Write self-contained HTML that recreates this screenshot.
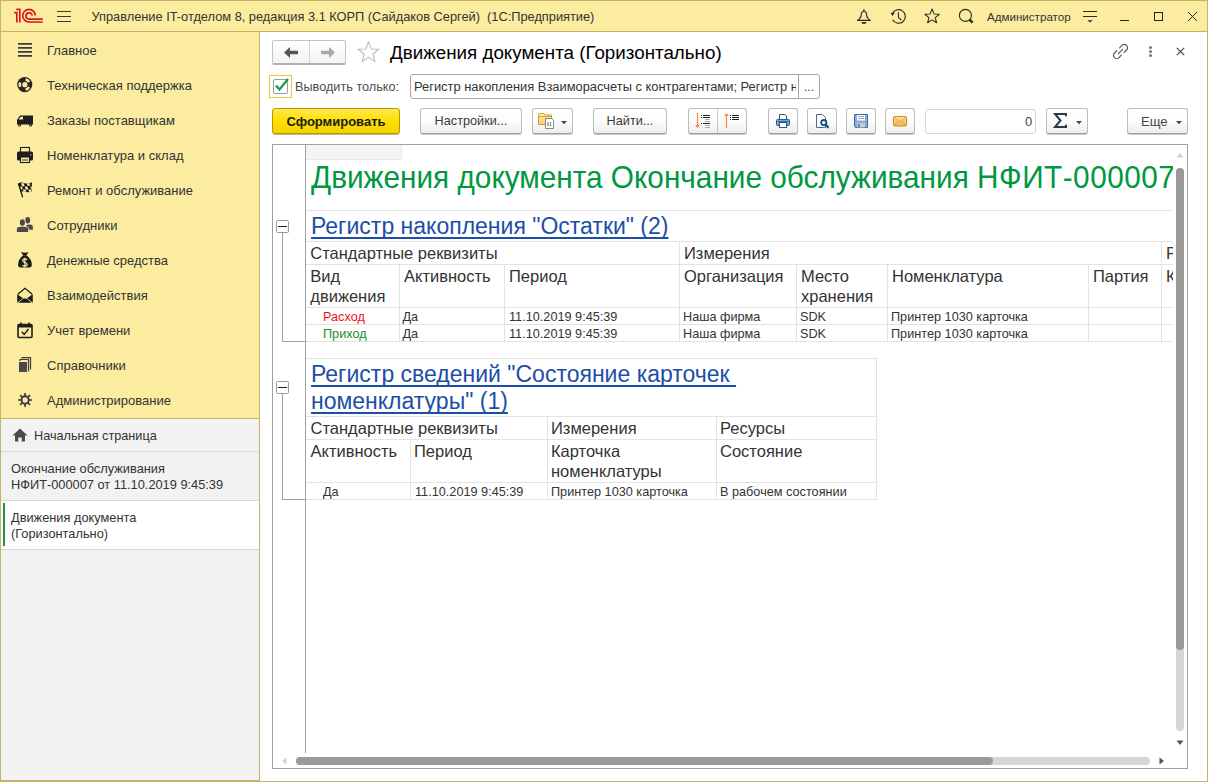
<!DOCTYPE html>
<html><head><meta charset="utf-8">
<style>
*{margin:0;padding:0;box-sizing:border-box}
html,body{width:1208px;height:782px;overflow:hidden;background:#fff;font-family:"Liberation Sans",sans-serif;color:#333;position:relative}
.a{position:absolute}
.n{white-space:nowrap}
svg{position:absolute;overflow:visible}
.si{position:absolute;left:47px;font-size:13px;color:#333;white-space:nowrap;line-height:16px}
.btn{position:absolute;top:108px;height:26px;border:1px solid #bcbcbc;border-bottom-color:#a0a0a0;border-radius:3px;background:linear-gradient(#ffffff 0%,#fcfcfc 50%,#ededed 100%);box-shadow:0 1px 0 rgba(0,0,0,.22);font-size:12.7px;color:#3a3a3a;text-align:center;line-height:25px;white-space:nowrap}
.gl{position:absolute;background:#e3e3e3}
.c16{position:absolute;font-size:16.3px;color:#333;white-space:nowrap;line-height:20px}
.c13{position:absolute;font-size:12.7px;color:#333;white-space:nowrap;line-height:16px}
</style></head><body>
<!-- window frame -->
<div class="a" style="left:0;top:0;width:1208px;height:782px;border:1px solid #c5b466"></div>
<!-- title bar -->
<div class="a" style="left:1px;top:1px;width:1206px;height:30px;background:#fbeca0"></div>
<div class="a" style="left:0;top:31px;width:1208px;height:1px;background:#c5b466"></div>
<!-- sidebar -->
<div class="a" style="left:1px;top:32px;width:258px;height:386px;background:#fbeca0"></div>
<div class="a" style="left:1px;top:418px;width:258px;height:363px;background:#f2f2f2"></div>
<div class="a" style="left:1px;top:418px;width:258px;height:1px;background:#c5b466"></div>
<div class="a" style="left:259px;top:32px;width:1px;height:750px;background:#c5b466"></div>
<div class="a" style="left:0;top:780px;width:260px;height:1px;background:#c5b466"></div>

<!-- title bar content -->
<svg style="left:0;top:0" width="50" height="30" viewBox="0 0 50 30">
  <g fill="none" stroke="#d8141c" stroke-width="1.65">
    <path d="M14.1 12.6 H16.8 V22.5 M16.3 9.3 H19.8 V22.5"/>
    <path d="M35.3 15.6 A6.3 6.3 0 1 0 29 22 H42.8"/>
    <path d="M32.2 15.6 A3.15 3.15 0 1 0 29 19.1 H42.8"/>
  </g>
</svg>
<div class="a" style="left:57px;top:11px;width:14px;height:1px;background:#3a3a3a"></div>
<div class="a" style="left:57px;top:16px;width:14px;height:1px;background:#3a3a3a"></div>
<div class="a" style="left:57px;top:21px;width:14px;height:1px;background:#3a3a3a"></div>
<div class="a n" style="left:91.5px;top:9px;font-size:12.8px;line-height:16px;color:#333">Управление IT-отделом 8, редакция 3.1 КОРП (Сайдаков Сергей)&nbsp; (1С:Предприятие)</div>
<!-- bell -->
<svg style="left:856px;top:8px" width="16" height="17" viewBox="0 0 16 17">
  <circle cx="7.9" cy="2.1" r="0.95" fill="#2a2a2a"/>
  <path d="M5.5 5.4 Q5.5 3.5 7.9 3.5 Q10.3 3.5 10.3 5.4 Q10.5 9 12.4 10.9 L14.3 12.4 H1.5 L3.4 10.9 Q5.3 9 5.5 5.4Z" fill="none" stroke="#2a2a2a" stroke-width="1.1" stroke-linejoin="round"/>
  <path d="M5.3 14 H10.5 Q10.1 15.9 7.9 15.9 Q5.7 15.9 5.3 14Z" fill="#2a2a2a"/>
</svg>
<!-- history -->
<svg style="left:890px;top:8px" width="17" height="17" viewBox="0 0 17 17">
  <path d="M2.2 6.0 A6.8 6.8 0 1 1 2.6 11.8" fill="none" stroke="#2a2a2a" stroke-width="1.15"/>
  <path d="M0.6 4.9 L4.9 4.6 L2.5 8.1Z" fill="#2a2a2a"/>
  <path d="M8.4 4.3 V9.3 L11.3 12" fill="none" stroke="#2a2a2a" stroke-width="1.1"/>
</svg>
<!-- star -->
<svg style="left:924px;top:8px" width="17" height="17" viewBox="0 0 17 17">
  <polygon points="8.10,1.00 10.04,5.93 15.33,6.25 11.24,9.62 12.57,14.75 8.10,11.90 3.63,14.75 4.96,9.62 0.87,6.25 6.16,5.93" fill="none" stroke="#2a2a2a" stroke-width="1.05" stroke-linejoin="round"/>
</svg>
<!-- search -->
<svg style="left:958px;top:8px" width="17" height="17" viewBox="0 0 17 17">
  <circle cx="7.4" cy="7.4" r="6.0" fill="none" stroke="#2a2a2a" stroke-width="1.1"/><path d="M11.6 11.6 L14.6 14.6" stroke="#2a2a2a" stroke-width="2.6"/>
</svg>
<div class="a n" style="left:987px;top:9.5px;font-size:11.6px;line-height:14px;color:#333">Администратор</div>
<!-- filter-like icon -->
<svg style="left:1083px;top:8px" width="16" height="16" viewBox="0 0 16 16">
  <path d="M0 3.5H14M0 8.5H14" stroke="#2a2a2a" stroke-width="1"/><path d="M4.5 12.3H9.6L7.05 14.6Z" fill="#2a2a2a"/>
</svg>
<div class="a" style="left:1120px;top:20px;width:9px;height:1px;background:#222"></div>
<div class="a" style="left:1154px;top:12px;width:9px;height:9px;border:1px solid #222"></div>
<svg style="left:1188px;top:12px" width="9" height="9" viewBox="0 0 9 9"><path d="M0 0L9 9M9 0L0 9" stroke="#222" stroke-width="0.95"/></svg>

<!-- sidebar items -->
<div class="si" style="top:43px">Главное</div>
<div class="si" style="top:78px">Техническая поддержка</div>
<div class="si" style="top:113px">Заказы поставщикам</div>
<div class="si" style="top:148px">Номенклатура и склад</div>
<div class="si" style="top:183px">Ремонт и обслуживание</div>
<div class="si" style="top:218px">Сотрудники</div>
<div class="si" style="top:253px">Денежные средства</div>
<div class="si" style="top:288px">Взаимодействия</div>
<div class="si" style="top:323px">Учет времени</div>
<div class="si" style="top:358px">Справочники</div>
<div class="si" style="top:393px">Администрирование</div>
<svg style="left:17px;top:38px" width="16" height="16" viewBox="0 0 16 16"><path d="M1 5.9H15M1 9.9H15M1 13.9H15M1 17.9H15" stroke="#3a3a44" stroke-width="1.9"/></svg>
<svg style="left:17px;top:77px" width="16" height="16" viewBox="0 0 16 16"><circle cx="7.75" cy="7.6" r="7.6" fill="#2b2626"/><circle cx="7.9" cy="7.7" r="2.6" fill="#fbeca0"/><g stroke="#fbeca0" stroke-width="2.5" fill="none"><path d="M8.6 2.6 A5.05 5.05 0 0 1 12.1 5.1"/><path d="M12.1 10.1 A5.05 5.05 0 0 1 8.6 12.6"/><path d="M3.2 9.7 A5.05 5.05 0 0 1 3.2 5.5"/></g></svg>
<svg style="left:17px;top:115px" width="16" height="16" viewBox="0 0 16 16"><path d="M6 0.5H16V9.5H0V5L3 0.5Z" fill="#1e1e1e"/><path d="M3.6 1.8H6V4.6H1.7Z" fill="#fbeca0"/><circle cx="2.6" cy="10" r="1.6" fill="#1e1e1e"/><circle cx="13.6" cy="10" r="1.6" fill="#1e1e1e"/><circle cx="2.6" cy="10" r="0.6" fill="#fbeca0"/><circle cx="13.6" cy="10" r="0.6" fill="#fbeca0"/></svg>
<svg style="left:17px;top:147px" width="16" height="16" viewBox="0 0 16 16"><rect x="3.5" y="0.5" width="9" height="5" fill="#fbeca0" stroke="#1e1e1e" stroke-width="1.1"/><rect x="0" y="4.5" width="16" height="9" rx="1.5" fill="#1e1e1e"/><rect x="13" y="7" width="1.5" height="1.5" fill="#8a8060"/><rect x="3.5" y="10" width="9" height="5.5" fill="#fbeca0" stroke="#1e1e1e" stroke-width="1.1"/><path d="M5 13H11" stroke="#1e1e1e" stroke-width="0.9"/></svg>
<svg style="left:14px;top:178px" width="22" height="22" viewBox="0 0 22 22"><defs><clipPath id="fc"><path d="M3.8 5.8 Q7 3.6 10.5 5.2 Q14 6.4 17.8 4.2 V13.5 Q14 15 11 13.6 Q8.5 12.6 7 13.8Z"/></clipPath></defs><path d="M3.8 5.8 Q7 3.6 10.5 5.2 Q14 6.4 17.8 4.2 V13.5 Q14 15 11 13.6 Q8.5 12.6 7 13.8Z" fill="#141414"/><g clip-path="url(#fc)" fill="#fbeca0"><polygon points="7.05,5.35 9.80,5.35 10.70,8.25 7.95,8.25"/><polygon points="12.55,4.85 15.30,4.85 16.20,7.75 13.45,7.75"/><polygon points="5.20,8.50 7.95,8.50 8.85,11.40 6.10,11.40"/><polygon points="10.70,8.50 13.45,8.50 14.35,11.40 11.60,11.40"/><polygon points="16.20,8.50 18.95,8.50 19.85,11.40 17.10,11.40"/><polygon points="8.85,11.40 11.60,11.40 12.50,14.30 9.75,14.30"/><polygon points="14.35,11.40 17.10,11.40 18.00,14.30 15.25,14.30"/></g><path d="M5 7 L8.6 19.3" stroke="#141414" stroke-width="1.3"/></svg>
<svg style="left:14px;top:212px" width="22" height="22" viewBox="0 0 22 22"><g fill="#48484e"><ellipse cx="13.7" cy="8.3" rx="2.4" ry="3.3"/><path d="M12.3 13.2 Q13 12.6 15 12.6 H16.5 Q18.9 12.8 18.9 15 V17.7 H12.3Z"/></g><g fill="#48484e" stroke="#fbeca0" stroke-width="1.4" paint-order="stroke"><ellipse cx="8.35" cy="10.5" rx="2.5" ry="3.3"/><path d="M2.9 19.9 V17 Q3.1 14.8 6.4 14.8 H10.4 Q13.9 14.8 14.1 17 V19.9Z"/></g></svg>
<svg style="left:14px;top:248px" width="22" height="22" viewBox="0 0 22 22"><path d="M6.9 4.1 Q10.8 5.2 14.6 4.1 L12.3 7.4 H9.3 Z" fill="#1a1a1a"/><path d="M9.3 7.2 H12.3 Q17.8 11 17.8 16.8 Q17.8 19.5 15.4 19.5 H6.5 Q4.1 19.5 4.1 16.8 Q4.1 11 9.3 7.2 Z" fill="#1a1a1a"/><g fill="none" stroke="#fbeca0" stroke-width="1.25"><path d="M12.9 11.9 Q12.3 10.9 10.9 10.9 Q8.7 10.9 8.7 12.6 Q8.7 14 10.9 14.5 Q13.1 15 13.1 16.6 Q13.1 18.2 10.9 18.2 Q9.3 18.2 8.5 17.1"/><path d="M10.9 9.7 V19.2"/></g></svg>
<svg style="left:17px;top:284px" width="16" height="20" viewBox="0 0 16 20"><path d="M0.8 10.2 L8 4.3 L15.2 10.2" fill="none" stroke="#1a1a1a" stroke-width="1.2"/><path d="M0.2 10.2 L6 14.3 L0.2 18.7Z M15.8 10.2 L10 14.3 L15.8 18.7Z M1.4 18.8 L6.6 14.6 H9.4 L14.6 18.8Z" fill="#1a1a1a"/></svg>
<svg style="left:17px;top:322px" width="16" height="16" viewBox="0 0 16 16"><rect x="1" y="2.5" width="14" height="13" rx="1" fill="none" stroke="#1e1e1e" stroke-width="1.6"/><rect x="1" y="2.5" width="14" height="3" fill="#1e1e1e"/><path d="M4 0.5V3M12 0.5V3" stroke="#1e1e1e" stroke-width="1.6"/><path d="M4.8 9.8 L7.2 12.4 L11.5 7" fill="none" stroke="#1e1e1e" stroke-width="1.5"/></svg>
<svg style="left:17px;top:357px" width="16" height="16" viewBox="0 0 16 16"><rect x="2" y="5" width="8" height="10" fill="#48484e"/><path d="M3 4V2.5H11.5V14H11" fill="none" stroke="#3c3c44" stroke-width="1.2"/><path d="M5 1.5V0.6H13.5V12H13" fill="none" stroke="#3c3c44" stroke-width="1.2"/></svg>
<svg style="left:17px;top:392px" width="16" height="16" viewBox="0 0 16 16"><circle cx="8.1" cy="8.0" r="3.65" fill="none" stroke="#3a3a42" stroke-width="2"/><path d="M8.10 4.00L8.10 1.00M10.93 5.17L13.05 3.05M12.10 8.00L15.10 8.00M10.93 10.83L13.05 12.95M8.10 12.00L8.10 15.00M5.27 10.83L3.15 12.95M4.10 8.00L1.10 8.00M5.27 5.17L3.15 3.05" stroke="#3a3a42" stroke-width="1.7"/></svg>
<!-- open windows -->
<svg style="left:12px;top:428px" width="16" height="14" viewBox="0 0 16 14"><path d="M8 0.5 L15.5 7.5 H13 V13.5 H9.7 V9.5 H6.3 V13.5 H3 V7.5 H0.5Z" fill="#4a4a4a"/></svg>
<div class="si" style="left:34px;top:427.5px;font-size:12.7px">Начальная страница</div>
<div class="a" style="left:1px;top:451px;width:258px;height:1px;background:#d9d9d9"></div>
<div class="si" style="left:11px;top:460.5px;font-size:12.8px;line-height:16px">Окончание обслуживания<br>НФИТ-000007 от 11.10.2019 9:45:39</div>
<div class="a" style="left:1px;top:500px;width:258px;height:1px;background:#d9d9d9"></div>
<div class="a" style="left:1px;top:501px;width:258px;height:48px;background:#fff"></div>
<div class="a" style="left:3px;top:503px;width:2px;height:43px;background:#1a9641"></div>
<div class="si" style="left:11px;top:509.5px;font-size:12.8px;line-height:16px">Движения документа<br>(Горизонтально)</div>
<div class="a" style="left:1px;top:549px;width:258px;height:1px;background:#d9d9d9"></div>
<!-- form header -->
<div class="a" style="left:272px;top:40px;width:74px;height:25px;border:1px solid #c4c4c4;border-bottom:2px solid #b0b0b0;border-radius:2px;background:linear-gradient(#fff,#f3f3f3)"></div>
<div class="a" style="left:309px;top:41px;width:1px;height:22px;background:#d4d4d4"></div>
<svg style="left:284px;top:47px" width="15" height="11" viewBox="0 0 15 11"><path d="M0 5.5 L6 0 V3.8 H14 V7.2 H6 V11Z" fill="#555"/></svg>
<svg style="left:320px;top:47px" width="15" height="11" viewBox="0 0 15 11"><path d="M15 5.5 L9 0 V3.8 H1 V7.2 H9 V11Z" fill="#a8a8a8"/></svg>
<svg style="left:357px;top:41px" width="23" height="22" viewBox="0 0 23 22"><path d="M11.5 1 L14.2 8 L21.8 8.3 L15.9 13 L17.9 20.6 L11.5 16.3 L5.1 20.6 L7.1 13 L1.2 8.3 L8.8 8Z" fill="none" stroke="#b4bcc4" stroke-width="1.1" stroke-linejoin="miter"/></svg>
<div class="a n" style="left:390px;top:41.6px;font-size:18.8px;line-height:22px;color:#000">Движения документа (Горизонтально)</div>
<svg style="left:1112px;top:43px" width="17" height="17" viewBox="0 0 17 17"><g fill="none" stroke="#555" stroke-width="1.15" stroke-linecap="round"><path d="M7.6 4.8 L10 2.4 A2.9 2.9 0 0 1 14.6 7 L12.2 9.4"/><path d="M9.4 12.2 L7 14.6 A2.9 2.9 0 0 1 2.4 10 L4.8 7.6"/><path d="M6.3 10.7 L10.7 6.3"/></g></svg>
<div class="a" style="left:1149px;top:46px;width:3px;height:3px;border-radius:50%;background:#777"></div>
<div class="a" style="left:1149px;top:50px;width:3px;height:3px;border-radius:50%;background:#777"></div>
<div class="a" style="left:1149px;top:54px;width:3px;height:3px;border-radius:50%;background:#777"></div>
<svg style="left:1176px;top:47px" width="9" height="9" viewBox="0 0 9 9"><path d="M0.8 0.8L8.2 8.2M8.2 0.8L0.8 8.2" stroke="#444" stroke-width="1.2"/></svg>
<!-- checkbox row -->
<div class="a" style="left:269px;top:75px;width:23px;height:23px;border:1px solid #f2c43a"></div>
<div class="a" style="left:273px;top:79px;width:15px;height:15px;border:1px solid #9a9a9a;border-radius:2px;background:#fff"></div>
<svg style="left:274px;top:77px" width="16" height="16" viewBox="0 0 16 16"><path d="M2 8.5 L5.5 12.5 L14 2" fill="none" stroke="#1c9a48" stroke-width="2.3"/></svg>
<div class="a n" style="left:295px;top:79px;font-size:12.7px;line-height:16px;color:#4d4d4d">Выводить только:</div>
<div class="a" style="left:410px;top:74px;width:410px;height:25px;border:1px solid #a6a6a6;border-radius:3px;background:#fff;overflow:hidden">
  <div class="a n" style="left:3px;top:4px;width:382px;overflow:hidden;font-size:12.88px;line-height:16px;color:#333">Регистр накопления Взаиморасчеты с контрагентами; Регистр накопления</div>
  <div class="a" style="left:387px;top:0;width:1px;height:23px;background:#a6a6a6"></div>
  <div class="a n" style="left:393px;top:4px;font-size:12px;line-height:16px;color:#444">...</div>
</div>
<!-- toolbar -->
<div class="a" style="left:272px;top:108px;width:128px;height:26px;border:1px solid #b29a00;border-radius:3px;background:linear-gradient(#ffe94d,#ffe000 50%,#f5d300);box-shadow:0 1px 0 rgba(120,100,0,.45)"></div>
<div class="a n" style="left:272px;top:113.5px;width:128px;text-align:center;font-size:13px;font-weight:bold;line-height:16px;color:#1a1a1a">Сформировать</div>
<div class="btn" style="left:420px;width:102px">Настройки...</div>
<div class="btn" style="left:532px;width:41px"></div>
<div class="btn" style="left:593px;width:74px">Найти...</div>
<div class="btn" style="left:688px;width:59px"></div>
<div class="a" style="left:717px;top:109px;width:1px;height:24px;background:#c8c8c8"></div>
<div class="btn" style="left:768px;width:30px"></div>
<div class="btn" style="left:807px;width:30px"></div>
<div class="btn" style="left:846px;width:30px"></div>
<div class="btn" style="left:885px;width:30px"></div>
<div class="a" style="left:925px;top:109px;width:111px;height:25px;border:1px solid #d6d6d6;border-radius:3px;background:#fff"></div>
<div class="a n" style="left:1025px;top:114px;font-size:13px;line-height:16px;color:#444">0</div>
<div class="btn" style="left:1046px;width:42px"></div>
<div class="btn" style="left:1127px;width:61px"></div>
<div class="a n" style="left:1141px;top:114px;font-size:13px;line-height:16px;color:#444">Еще</div>
<svg style="left:1176px;top:121px" width="6" height="4" viewBox="0 0 6 4"><path d="M0 0H6L3 3.2Z" fill="#444"/></svg>
<svg style="left:1076px;top:121px" width="6" height="4" viewBox="0 0 6 4"><path d="M0 0H6L3 3.2Z" fill="#444"/></svg>
<svg style="left:561px;top:121px" width="6" height="4" viewBox="0 0 6 4"><path d="M0 0H6L3 3.2Z" fill="#444"/></svg>
<!-- sigma -->
<svg style="left:1054px;top:113px" width="13" height="15" viewBox="0 0 13 15"><path d="M12 3.2 V1 H1 L6.5 7.5 L1 14 H12 V11.8" fill="none" stroke="#2a3a4a" stroke-width="2"/></svg>
<!-- toolbar icons -->
<svg style="left:532px;top:108px" width="30" height="26" viewBox="0 0 30 26">
  <defs><linearGradient id="fg" x1="0" y1="0" x2="0" y2="1"><stop offset="0" stop-color="#fff0a8"/><stop offset="1" stop-color="#f4cf6e"/></linearGradient></defs>
  <path d="M6.5 16.5 V6.3 Q6.5 5.5 7.3 5.5 H11.8 L13 7 H19.5 V16.5Z" fill="url(#fg)" stroke="#d49a38" stroke-width="1"/>
  <path d="M7 8.5 H19" stroke="#d49a38" stroke-width="0.9"/>
  <path d="M13.5 10.5 H19.8 L21.5 12.2 V20.5 H13.5Z" fill="#fff" stroke="#7a8a98" stroke-width="1"/>
  <rect x="15.5" y="14" width="1" height="3.5" fill="#e8322e"/><rect x="18" y="14" width="1" height="3.5" fill="#2fb040"/><rect x="15" y="17.5" width="4.5" height="0.6" fill="#8a8a8a"/>
</svg>
<svg style="left:688px;top:108px" width="60" height="26" viewBox="0 0 60 26">
  <g stroke="#f08a4b" stroke-width="1.2"><path d="M9.5 5 V18.5"/><path d="M38.5 8 V20"/></g>
  <path d="M7 17 H12 L9.5 20Z M36 8 H41 L38.5 5Z" fill="#f08a4b"/>
  <g stroke="#222" stroke-width="1"><path d="M15 7.5H22M15 9.5H22M15 15.5H22M44 7.5H51M44 9.5H51M44 11.5H51"/></g>
  <g stroke="#aaa" stroke-width="1"><path d="M17 11.5H22M17 13.5H22M17 17.5H22M17 19.5H22"/></g>
  <g fill="#222"><rect x="13" y="7" width="1" height="1"/><rect x="13" y="9" width="1" height="1"/><rect x="13" y="15" width="1" height="1"/><rect x="42" y="7" width="1" height="1"/><rect x="42" y="9" width="1" height="1"/><rect x="42" y="11" width="1" height="1"/></g>
</svg>
<svg style="left:768px;top:108px" width="30" height="26" viewBox="0 0 30 26">
  <path d="M11.5 6.5 H17 L18.5 8 V12 H11.5Z" fill="#fff" stroke="#2f5b85" stroke-width="1"/>
  <rect x="8.5" y="11.5" width="13" height="6" rx="1" fill="#7ea6d0" stroke="#2f5b85" stroke-width="1"/>
  <path d="M9.5 13.5 H20.5" stroke="#2f5b85" stroke-width="0.8"/>
  <rect x="11.5" y="14.5" width="7" height="5" fill="#fff" stroke="#2f5b85" stroke-width="1"/>
</svg>
<svg style="left:807px;top:108px" width="30" height="26" viewBox="0 0 30 26">
  <path d="M9.5 6.5 H15.5 L18.5 9.5 V19.5 H9.5Z" fill="#fbfbfb" stroke="#506a88" stroke-width="1"/>
  <circle cx="16.8" cy="14.6" r="2.6" fill="#fff" stroke="#0d4f86" stroke-width="1.8"/>
  <path d="M18.6 16.6 L21.5 19.8" stroke="#0d4f86" stroke-width="2.2"/>
</svg>
<svg style="left:846px;top:108px" width="30" height="26" viewBox="0 0 30 26">
  <path d="M8.5 6.5 H21.5 V19.5 H9.5 L8.5 18.5Z" fill="#86ace0" stroke="#3d6aa6" stroke-width="1"/>
  <rect x="11" y="7" width="8" height="5.5" fill="#fff"/>
  <path d="M12 8.5H18M12 10.5H18" stroke="#7d9cc8" stroke-width="0.8"/>
  <rect x="11" y="15" width="8" height="4.5" fill="#c8ccc8"/><rect x="12" y="16" width="1.6" height="3.5" fill="#4a7ab8"/>
</svg>
<svg style="left:885px;top:108px" width="30" height="26" viewBox="0 0 30 26">
  <defs><linearGradient id="mg" x1="0" y1="0" x2="0" y2="1"><stop offset="0" stop-color="#fbe2a0"/><stop offset="1" stop-color="#efb54e"/></linearGradient></defs>
  <rect x="8.5" y="8.5" width="13" height="9.5" rx="1.5" fill="url(#mg)" stroke="#d08a20" stroke-width="1"/>
  <path d="M9 9.5 L15 14 L21 9.5 M9 17.5 L13 13 M21 17.5 L17 13" fill="none" stroke="#d89a3a" stroke-width="0.7"/>
</svg>
<!-- spreadsheet frame -->
<div class="a" style="left:272px;top:144px;width:916px;height:625px;border:1px solid #a0a0a0;background:#fff"></div>
<div class="a" style="left:305px;top:145px;width:1px;height:608px;background:#a0a0a0"></div>
<div class="a" style="left:306px;top:145px;width:96px;height:15px;background:#f5f5f5;border-right:1px solid #ececec;border-bottom:1px solid #ececec"></div>
<!-- sheet content -->
<div class="a" style="left:306px;top:145px;width:867px;height:608px;overflow:hidden">
<div class="a" style="left:0;top:0;width:96px;height:15px;background:#f4f4f4;border-right:1px solid #e8e8e8;border-bottom:1px solid #e8e8e8"></div>
<div class="a n" style="left:5px;top:14.60px;font-size:30px;line-height:36px;color:#00983f;transform:scale(0.992,1.05);transform-origin:0 29.6px">Движения документа Окончание обслуживания <span style="letter-spacing:0.5px">НФИТ-000007</span></div>
<div class="a" style="left:0px;top:65px;width:867px;height:1px;background:#e3e3e3"></div>
<div class="a" style="left:0px;top:96px;width:867px;height:1px;background:#e3e3e3"></div>
<div class="a" style="left:0px;top:119px;width:867px;height:1px;background:#e3e3e3"></div>
<div class="a" style="left:0px;top:162px;width:867px;height:1px;background:#e3e3e3"></div>
<div class="a" style="left:0px;top:179px;width:867px;height:1px;background:#e3e3e3"></div>
<div class="a" style="left:0px;top:196px;width:867px;height:1px;background:#e3e3e3"></div>
<div class="a n" style="left:5px;top:66.53px;font-size:23px;line-height:28px;color:#1d4ea6;text-decoration:underline;text-decoration-skip-ink:none;text-underline-offset:3px">Регистр накопления "Остатки" (2)</div>
<div class="a" style="left:373px;top:96px;width:1px;height:100px;background:#e3e3e3"></div>
<div class="a" style="left:855px;top:96px;width:1px;height:100px;background:#e3e3e3"></div>
<div class="a" style="left:93px;top:119px;width:1px;height:77px;background:#e3e3e3"></div>
<div class="a" style="left:198px;top:119px;width:1px;height:77px;background:#e3e3e3"></div>
<div class="a" style="left:490px;top:119px;width:1px;height:77px;background:#e3e3e3"></div>
<div class="a" style="left:581px;top:119px;width:1px;height:77px;background:#e3e3e3"></div>
<div class="a" style="left:782px;top:119px;width:1px;height:77px;background:#e3e3e3"></div>
<div class="a n" style="left:4.300000000000011px;top:98.28px;font-size:16.5px;line-height:20px;color:#333;">Стандартные реквизиты</div>
<div class="a n" style="left:378px;top:98.28px;font-size:16.5px;line-height:20px;color:#333;">Измерения</div>
<div class="a n" style="left:860px;top:98.28px;font-size:16.5px;line-height:20px;color:#333;">Ресурсы</div>
<div class="a n" style="left:4.300000000000011px;top:121.48px;font-size:16.5px;line-height:20px;color:#333;">Вид</div>
<div class="a n" style="left:4.300000000000011px;top:141.48px;font-size:16.5px;line-height:20px;color:#333;">движения</div>
<div class="a n" style="left:98px;top:121.48px;font-size:16.5px;line-height:20px;color:#333;">Активность</div>
<div class="a n" style="left:203px;top:121.48px;font-size:16.5px;line-height:20px;color:#333;">Период</div>
<div class="a n" style="left:378px;top:121.48px;font-size:16.5px;line-height:20px;color:#333;">Организация</div>
<div class="a n" style="left:495px;top:121.48px;font-size:16.5px;line-height:20px;color:#333;">Место</div>
<div class="a n" style="left:495px;top:141.48px;font-size:16.5px;line-height:20px;color:#333;">хранения</div>
<div class="a n" style="left:586px;top:121.48px;font-size:16.5px;line-height:20px;color:#333;">Номенклатура</div>
<div class="a n" style="left:787px;top:121.48px;font-size:16.5px;line-height:20px;color:#333;">Партия</div>
<div class="a n" style="left:860px;top:121.48px;font-size:16.5px;line-height:20px;color:#333;">Количество</div>
<div class="a n" style="left:17px;top:164.60px;font-size:12.7px;line-height:15px;color:#f2101a;">Расход</div>
<div class="a n" style="left:96.5px;top:164.60px;font-size:12.7px;line-height:15px;color:#333;">Да</div>
<div class="a n" style="left:203px;top:164.60px;font-size:12.7px;line-height:15px;color:#333;">11.10.2019 9:45:39</div>
<div class="a n" style="left:377px;top:164.60px;font-size:12.7px;line-height:15px;color:#333;">Наша фирма</div>
<div class="a n" style="left:494px;top:164.60px;font-size:12.7px;line-height:15px;color:#333;">SDK</div>
<div class="a n" style="left:585px;top:164.60px;font-size:12.7px;line-height:15px;color:#333;">Принтер 1030 карточка</div>
<div class="a n" style="left:17px;top:181.60px;font-size:12.7px;line-height:15px;color:#1a8f2a;">Приход</div>
<div class="a n" style="left:96.5px;top:181.60px;font-size:12.7px;line-height:15px;color:#333;">Да</div>
<div class="a n" style="left:203px;top:181.60px;font-size:12.7px;line-height:15px;color:#333;">11.10.2019 9:45:39</div>
<div class="a n" style="left:377px;top:181.60px;font-size:12.7px;line-height:15px;color:#333;">Наша фирма</div>
<div class="a n" style="left:494px;top:181.60px;font-size:12.7px;line-height:15px;color:#333;">SDK</div>
<div class="a n" style="left:585px;top:181.60px;font-size:12.7px;line-height:15px;color:#333;">Принтер 1030 карточка</div>
<div class="a" style="left:0px;top:213px;width:570px;height:1px;background:#e3e3e3"></div>
<div class="a" style="left:0px;top:271px;width:570px;height:1px;background:#e3e3e3"></div>
<div class="a" style="left:0px;top:294px;width:570px;height:1px;background:#e3e3e3"></div>
<div class="a" style="left:0px;top:337px;width:570px;height:1px;background:#e3e3e3"></div>
<div class="a" style="left:0px;top:354px;width:570px;height:1px;background:#e3e3e3"></div>
<div class="a" style="left:570px;top:213px;width:1px;height:142px;background:#e3e3e3"></div>
<div class="a" style="left:241px;top:271px;width:1px;height:83px;background:#e3e3e3"></div>
<div class="a" style="left:410px;top:271px;width:1px;height:83px;background:#e3e3e3"></div>
<div class="a" style="left:104px;top:294px;width:1px;height:60px;background:#e3e3e3"></div>
<div class="a n" style="left:5px;top:215.33px;font-size:23px;line-height:28px;color:#1d4ea6;text-decoration:underline;text-decoration-skip-ink:none;text-underline-offset:3px">Регистр сведений "Состояние карточек&nbsp;</div>
<div class="a n" style="left:5px;top:242.03px;font-size:23px;line-height:28px;color:#1d4ea6;text-decoration:underline;text-decoration-skip-ink:none;text-underline-offset:3px">номенклатуры" (1)</div>
<div class="a n" style="left:4.5px;top:273.28px;font-size:16.5px;line-height:20px;color:#333;">Стандартные реквизиты</div>
<div class="a n" style="left:245px;top:273.28px;font-size:16.5px;line-height:20px;color:#333;">Измерения</div>
<div class="a n" style="left:414px;top:273.28px;font-size:16.5px;line-height:20px;color:#333;">Ресурсы</div>
<div class="a n" style="left:4.5px;top:296.28px;font-size:16.5px;line-height:20px;color:#333;">Активность</div>
<div class="a n" style="left:108px;top:296.28px;font-size:16.5px;line-height:20px;color:#333;">Период</div>
<div class="a n" style="left:245px;top:296.28px;font-size:16.5px;line-height:20px;color:#333;">Карточка</div>
<div class="a n" style="left:245px;top:316.28px;font-size:16.5px;line-height:20px;color:#333;">номенклатуры</div>
<div class="a n" style="left:414px;top:296.28px;font-size:16.5px;line-height:20px;color:#333;">Состояние</div>
<div class="a n" style="left:17px;top:339.60px;font-size:12.7px;line-height:15px;color:#333;">Да</div>
<div class="a n" style="left:109px;top:339.60px;font-size:12.7px;line-height:15px;color:#333;">11.10.2019 9:45:39</div>
<div class="a n" style="left:245px;top:339.60px;font-size:12.7px;line-height:15px;color:#333;">Принтер 1030 карточка</div>
<div class="a n" style="left:414px;top:339.60px;font-size:12.7px;line-height:15px;color:#333;">В рабочем состоянии</div>
</div>
<div class="a" style="left:276px;top:220px;width:13px;height:13px;border:1px solid #9a9a9a;border-radius:1.5px;background:#fff"></div>
<div class="a" style="left:278px;top:226px;width:9px;height:1px;background:#222"></div>
<div class="a" style="left:282px;top:233px;width:1px;height:109px;background:#a0a0a0"></div>
<div class="a" style="left:282px;top:341px;width:23px;height:1px;background:#a0a0a0"></div>
<div class="a" style="left:276px;top:381px;width:13px;height:13px;border:1px solid #9a9a9a;border-radius:1.5px;background:#fff"></div>
<div class="a" style="left:278px;top:387px;width:9px;height:1px;background:#222"></div>
<div class="a" style="left:282px;top:394px;width:1px;height:106px;background:#a0a0a0"></div>
<div class="a" style="left:282px;top:499px;width:23px;height:1px;background:#a0a0a0"></div>
<div class="a" style="left:1176px;top:168px;width:8px;height:563px;border-radius:4px;background:#d6d6d6"></div>
<div class="a" style="left:1176px;top:168px;width:8px;height:482px;border-radius:4px;background:#9a9a9a"></div>
<svg style="left:1176px;top:152px" width="8" height="6" viewBox="0 0 8 6"><path d="M0.5 5.5H7.5L4 1Z" fill="#cfcfcf"/></svg>
<svg style="left:1176px;top:740px" width="8" height="6" viewBox="0 0 8 6"><path d="M0.5 0.5H7.5L4 5Z" fill="#555"/></svg>
<div class="a" style="left:296px;top:757px;width:854px;height:8px;border-radius:4px;background:#d6d6d6"></div>
<div class="a" style="left:296px;top:757px;width:697px;height:8px;border-radius:4px;background:#9a9a9a"></div>
<svg style="left:281px;top:757px" width="6" height="8" viewBox="0 0 6 8"><path d="M5.5 0.5V7.5L1 4Z" fill="#cfcfcf"/></svg>
<svg style="left:1159px;top:757px" width="6" height="8" viewBox="0 0 6 8"><path d="M0.5 0.5V7.5L5 4Z" fill="#555"/></svg>
<div id="content"></div>
</body></html>
